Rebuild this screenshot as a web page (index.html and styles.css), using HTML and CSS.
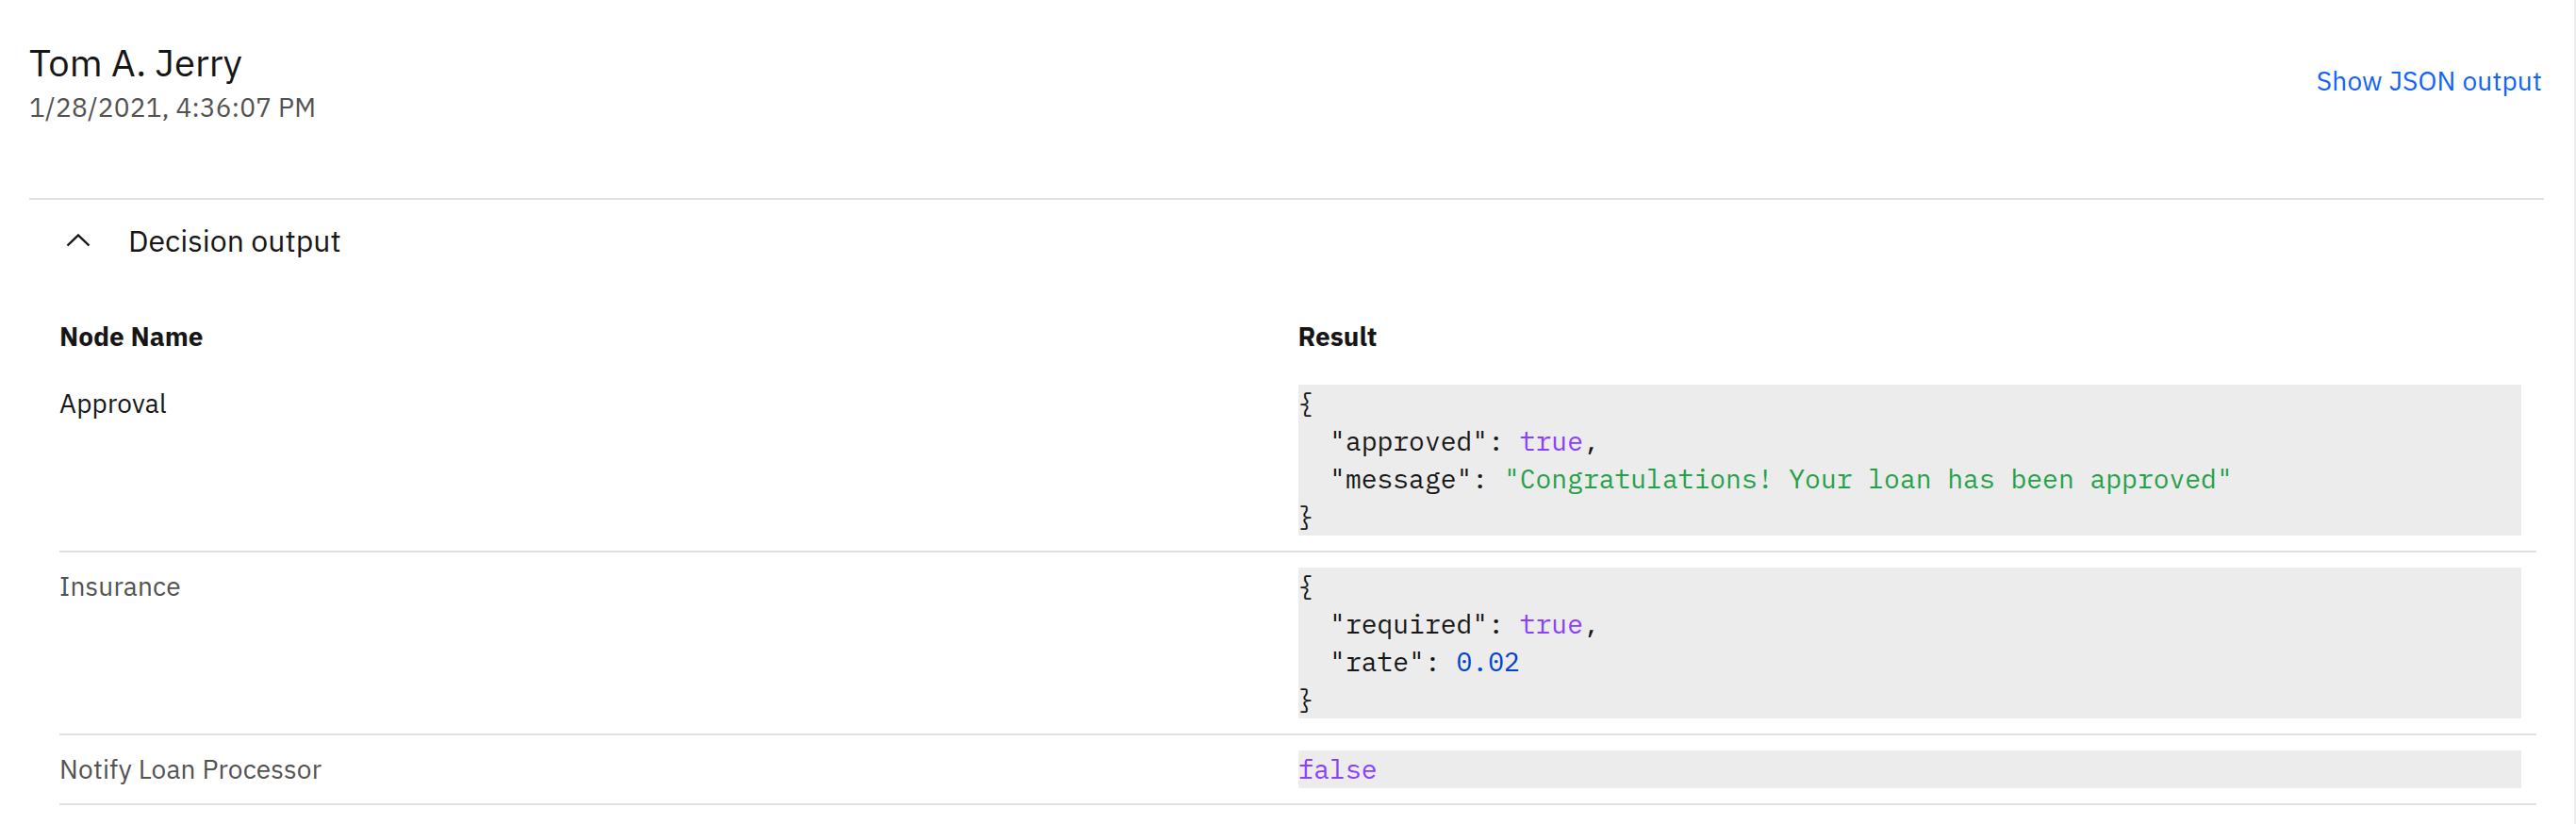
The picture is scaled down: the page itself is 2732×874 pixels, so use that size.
FILE: index.html
```html
<!DOCTYPE html>
<html lang="en">
<head>
<meta charset="utf-8">
<title>Decision output</title>
<link rel="stylesheet" href="styles.css">
</head>
<body>
<main class="page">
  <header class="summary">
    <div class="summary-info">
      <h1 class="summary-name">Tom A. Jerry</h1>
      <div class="summary-date">1/28/2021, 4:36:07 PM</div>
    </div>
    <a class="summary-link" href="#">Show JSON output</a>
  </header>

  <section class="accordion">
    <div class="accordion-heading">
      <svg class="accordion-chevron" width="26" height="14" viewBox="0 0 26 14" aria-hidden="true">
        <polyline points="1.5,12.5 13,1.5 24.5,12.5" fill="none" stroke="#161616" stroke-width="2.4"/>
      </svg>
      <span class="accordion-title">Decision output</span>
    </div>
    <div class="accordion-content">
      <table class="results">
        <thead>
          <tr>
            <th class="col-name">Node Name</th>
            <th class="col-result">Result</th>
          </tr>
        </thead>
        <tbody>
          <tr class="row row-active">
            <td class="cell-name">Approval</td>
            <td class="cell-result">
              <div class="code">
                <div class="line">{</div>
                <div class="line">  <span class="k">"approved"</span>: <span class="b">true</span>,</div>
                <div class="line">  <span class="k">"message"</span>: <span class="s">"Congratulations! Your loan has been approved"</span></div>
                <div class="line">}</div>
              </div>
            </td>
          </tr>
          <tr class="row">
            <td class="cell-name">Insurance</td>
            <td class="cell-result">
              <div class="code">
                <div class="line">{</div>
                <div class="line">  <span class="k">"required"</span>: <span class="b">true</span>,</div>
                <div class="line">  <span class="k">"rate"</span>: <span class="n">0.02</span></div>
                <div class="line">}</div>
              </div>
            </td>
          </tr>
          <tr class="row">
            <td class="cell-name">Notify Loan Processor</td>
            <td class="cell-result">
              <div class="code">
                <div class="line"><span class="b">false</span></div>
              </div>
            </td>
          </tr>
        </tbody>
      </table>
    </div>
  </section>
</main>
</body>
</html>
```
FILE: styles.css
```css
html, body {
  margin: 0;
  padding: 0;
  background: #ffffff;
}

body {
  font-family: "IBM Plex Sans", "Liberation Sans", Arial, sans-serif;
  color: #161616;
}

.page {
  min-height: 874px;
  box-sizing: border-box;
  padding: 38px 32px 0 31px;
  border-right: 2px solid #efefef;
}

.summary {
  display: flex;
  align-items: center;
  justify-content: space-between;
  height: 96px;
}

.summary-name {
  margin: 0;
  font-size: 40px;
  line-height: 56px;
  font-weight: 400;
  color: #161616;
}

.summary-date {
  font-size: 28px;
  line-height: 40px;
  letter-spacing: 0.2px;
  color: #525252;
}

.summary-link {
  font-size: 28px;
  line-height: 40px;
  letter-spacing: 0.2px;
  color: #0f62fe;
  text-decoration: none;
  margin-right: 2px;
}

.accordion {
  margin-top: 76px;
  border-top: 2px solid #e0e0e0;
}

.accordion-heading {
  display: flex;
  align-items: center;
  padding: 23px 0 24px 0;
}

.accordion-chevron {
  display: block;
  margin-left: 39px;
  margin-right: 40px;
}

.accordion-title {
  font-size: 32px;
  line-height: 40px;
  color: #161616;
}

.accordion-content {
  padding: 21px 8px 0 32px;
}

.results {
  width: 100%;
  border-collapse: collapse;
  table-layout: fixed;
}

.results th {
  text-align: left;
  font-size: 28px;
  line-height: 40px;
  font-weight: 700;
  color: #161616;
  padding: 17px 0 15px 0;
  vertical-align: top;
}

.results td {
  vertical-align: top;
  padding: 16px 0;
  font-size: 28px;
  line-height: 40px;
  letter-spacing: 0.2px;
  color: #525252;
}

.results .col-result,
.results .cell-result {
  padding-right: 16px;
}

.row {
  border-bottom: 2px solid #e0e0e0;
}

.row-active .cell-name {
  color: #161616;
}

.code {
  background: #ececec;
  font-family: "IBM Plex Mono", "DejaVu Sans Mono", "Liberation Mono", monospace;
  font-size: 28px;
  line-height: 40px;
  letter-spacing: 0;
  color: #161616;
}

.line {
  white-space: pre;
  height: 40px;
}

.code .k { color: #161616; }
.code .b { color: #8a3ffc; }
.code .s { color: #24a148; }
.code .n { color: #0043ce; }
```
